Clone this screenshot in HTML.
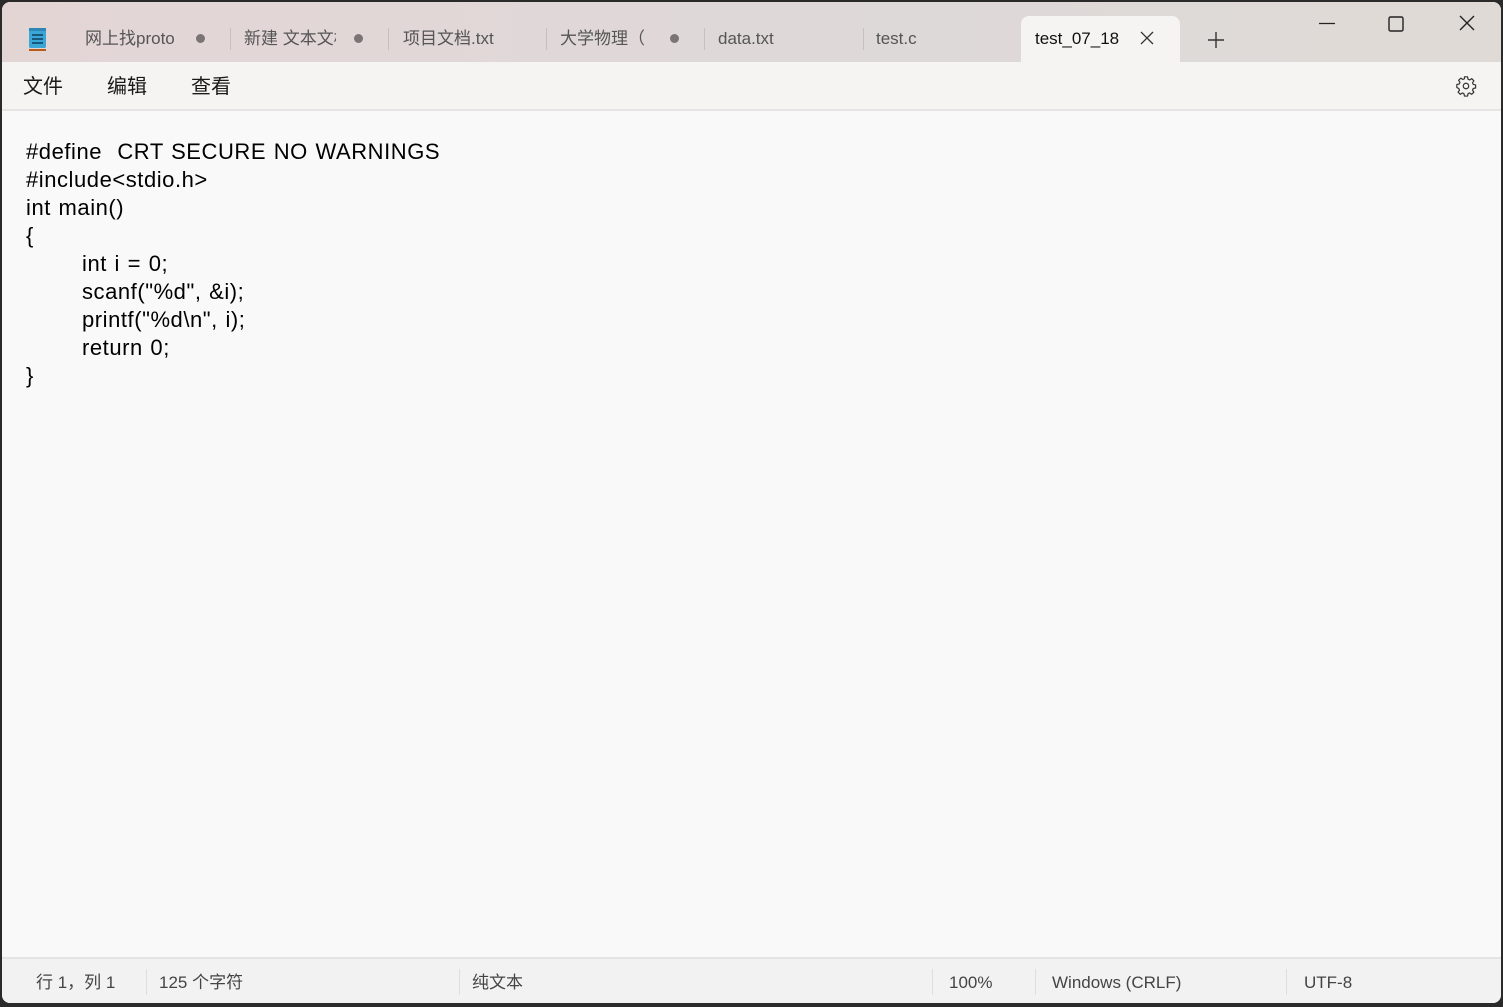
<!DOCTYPE html>
<html><head><meta charset="utf-8"><style>
*{margin:0;padding:0;box-sizing:border-box}
body{width:1503px;height:1007px;overflow:hidden;background:#2a2a2a;font-family:"Liberation Sans","Noto Sans CJK SC",sans-serif;position:relative}
.win{position:absolute;left:2px;top:2px;width:1499px;height:1001px;border-radius:8px;overflow:hidden;background:#f9f9f9}
.title{position:absolute;left:0;top:0;width:100%;height:61px;background:linear-gradient(90deg,#e4d5d5 0%,#e0d8d8 40%,#ddd9d8 60%,#e0dad6 100%)}
.tab{position:absolute;top:26px;height:22px;line-height:22px;font-size:17px;color:#555;white-space:nowrap;overflow:hidden}
.sep{position:absolute;top:26px;width:1px;height:22px;background:#c8c0c0}
.dot{position:absolute;top:32px;width:9px;height:9px;border-radius:50%;background:#7a7474}
.active{position:absolute;left:1019px;top:14px;width:159px;height:48px;background:#f6f4f3;border-radius:8px 8px 0 0}
.menu{position:absolute;left:0;top:60px;width:100%;height:49px;background:#f6f4f3;border-bottom:2px solid #e6e4e4}
.menu span{position:absolute;top:12px;height:26px;line-height:26px;font-size:20px;color:#1a1a1a}
.code{position:absolute;left:24px;top:136px;font-size:22px;line-height:28px;color:#000;white-space:pre;font-family:"Liberation Sans",sans-serif;letter-spacing:0.55px;word-spacing:1px}
.code b{font-weight:normal;padding-left:56px}
.status{position:absolute;left:0;top:955px;width:100%;height:46px;background:#f3f2f2;border-top:2px solid #e4e4e4}
.status span{position:absolute;top:13px;height:22px;line-height:22px;font-size:17px;color:#444}
.status i{position:absolute;top:10px;width:1px;height:26px;background:#dedede}
</style></head><body>
<div class="win">
<div class="title">
 <svg style="position:absolute;left:26px;top:25px" width="20" height="25" viewBox="0 0 20 25"><rect x="1" y="1" width="17" height="20" rx="1.5" fill="#3aa6d8"/><rect x="1" y="1" width="17" height="3" fill="#2f87b8"/><g stroke="#0d3f5e" stroke-width="1.6"><line x1="4" y1="8" x2="15" y2="8"/><line x1="4" y1="12" x2="15" y2="12"/><line x1="4" y1="16" x2="15" y2="16"/></g><rect x="1" y="22" width="17" height="2" fill="#b85a1a"/></svg>
 <div class="tab" style="left:83px;width:92px">网上找proto</div><div class="dot" style="left:194px"></div><div class="sep" style="left:228px"></div>
 <div class="tab" style="left:242px;width:92px">新建 文本文档</div><div class="dot" style="left:352px"></div><div class="sep" style="left:386px"></div>
 <div class="tab" style="left:401px">项目文档.txt</div><div class="sep" style="left:544px"></div>
 <div class="tab" style="left:558px">大学物理（</div><div class="dot" style="left:668px"></div><div class="sep" style="left:702px"></div>
 <div class="tab" style="left:716px">data.txt</div><div class="sep" style="left:861px"></div>
 <div class="tab" style="left:874px">test.c</div>
 <div class="active"></div>
 <div class="tab" style="left:1033px;color:#111">test_07_18</div>
 <svg style="position:absolute;left:1138px;top:29px" width="14" height="14"><path d="M1 1L13 13M13 1L1 13" stroke="#333" stroke-width="1.3"/></svg>
 <svg style="position:absolute;left:1206px;top:30px" width="16" height="16"><path d="M8 0V16M0 8H16" stroke="#333" stroke-width="1.4"/></svg>
 <svg style="position:absolute;left:1317px;top:20px" width="16" height="4"><path d="M0 1.5H16" stroke="#222" stroke-width="1.3"/></svg>
 <svg style="position:absolute;left:1386px;top:14px" width="16" height="16"><rect x="1" y="1" width="14" height="14" rx="1.5" fill="none" stroke="#222" stroke-width="1.4"/></svg>
 <svg style="position:absolute;left:1457px;top:13px" width="16" height="16"><path d="M1 1L15 15M15 1L1 15" stroke="#222" stroke-width="1.4"/></svg>
</div>
<div class="menu">
 <span style="left:21px">文件</span><span style="left:105px">编辑</span><span style="left:189px">查看</span>
 <svg style="position:absolute;left:1453px;top:13px" width="22" height="22" viewBox="0 0 24 24"><path d="M10.3 2h3.4l.5 2.6 1.8.8 2.2-1.5 2.4 2.4-1.5 2.2.8 1.8 2.6.5v3.4l-2.6.5-.8 1.8 1.5 2.2-2.4 2.4-2.2-1.5-1.8.8-.5 2.6h-3.4l-.5-2.6-1.8-.8-2.2 1.5-2.4-2.4 1.5-2.2-.8-1.8L2 13.7v-3.4l2.6-.5.8-1.8-1.5-2.2 2.4-2.4 2.2 1.5 1.8-.8z" fill="none" stroke="#333" stroke-width="1.3" stroke-linejoin="round"/><circle cx="12" cy="12" r="3" fill="none" stroke="#333" stroke-width="1.3"/></svg>
</div>
<div class="code">#define  CRT SECURE NO WARNINGS
#include&lt;stdio.h&gt;
int main()
{
<b>int i = 0;</b>
<b>scanf("%d", &amp;i);</b>
<b>printf("%d\n", i);</b>
<b>return 0;</b>
}</div>
<div class="status">
 <span style="left:34px">行 1，列 1</span><i style="left:144px"></i>
 <span style="left:157px">125 个字符</span><i style="left:457px"></i>
 <span style="left:470px">纯文本</span><i style="left:930px"></i>
 <span style="left:947px">100%</span><i style="left:1033px"></i>
 <span style="left:1050px">Windows (CRLF)</span><i style="left:1284px"></i>
 <span style="left:1302px">UTF-8</span>
</div>
</div>
</body></html>
